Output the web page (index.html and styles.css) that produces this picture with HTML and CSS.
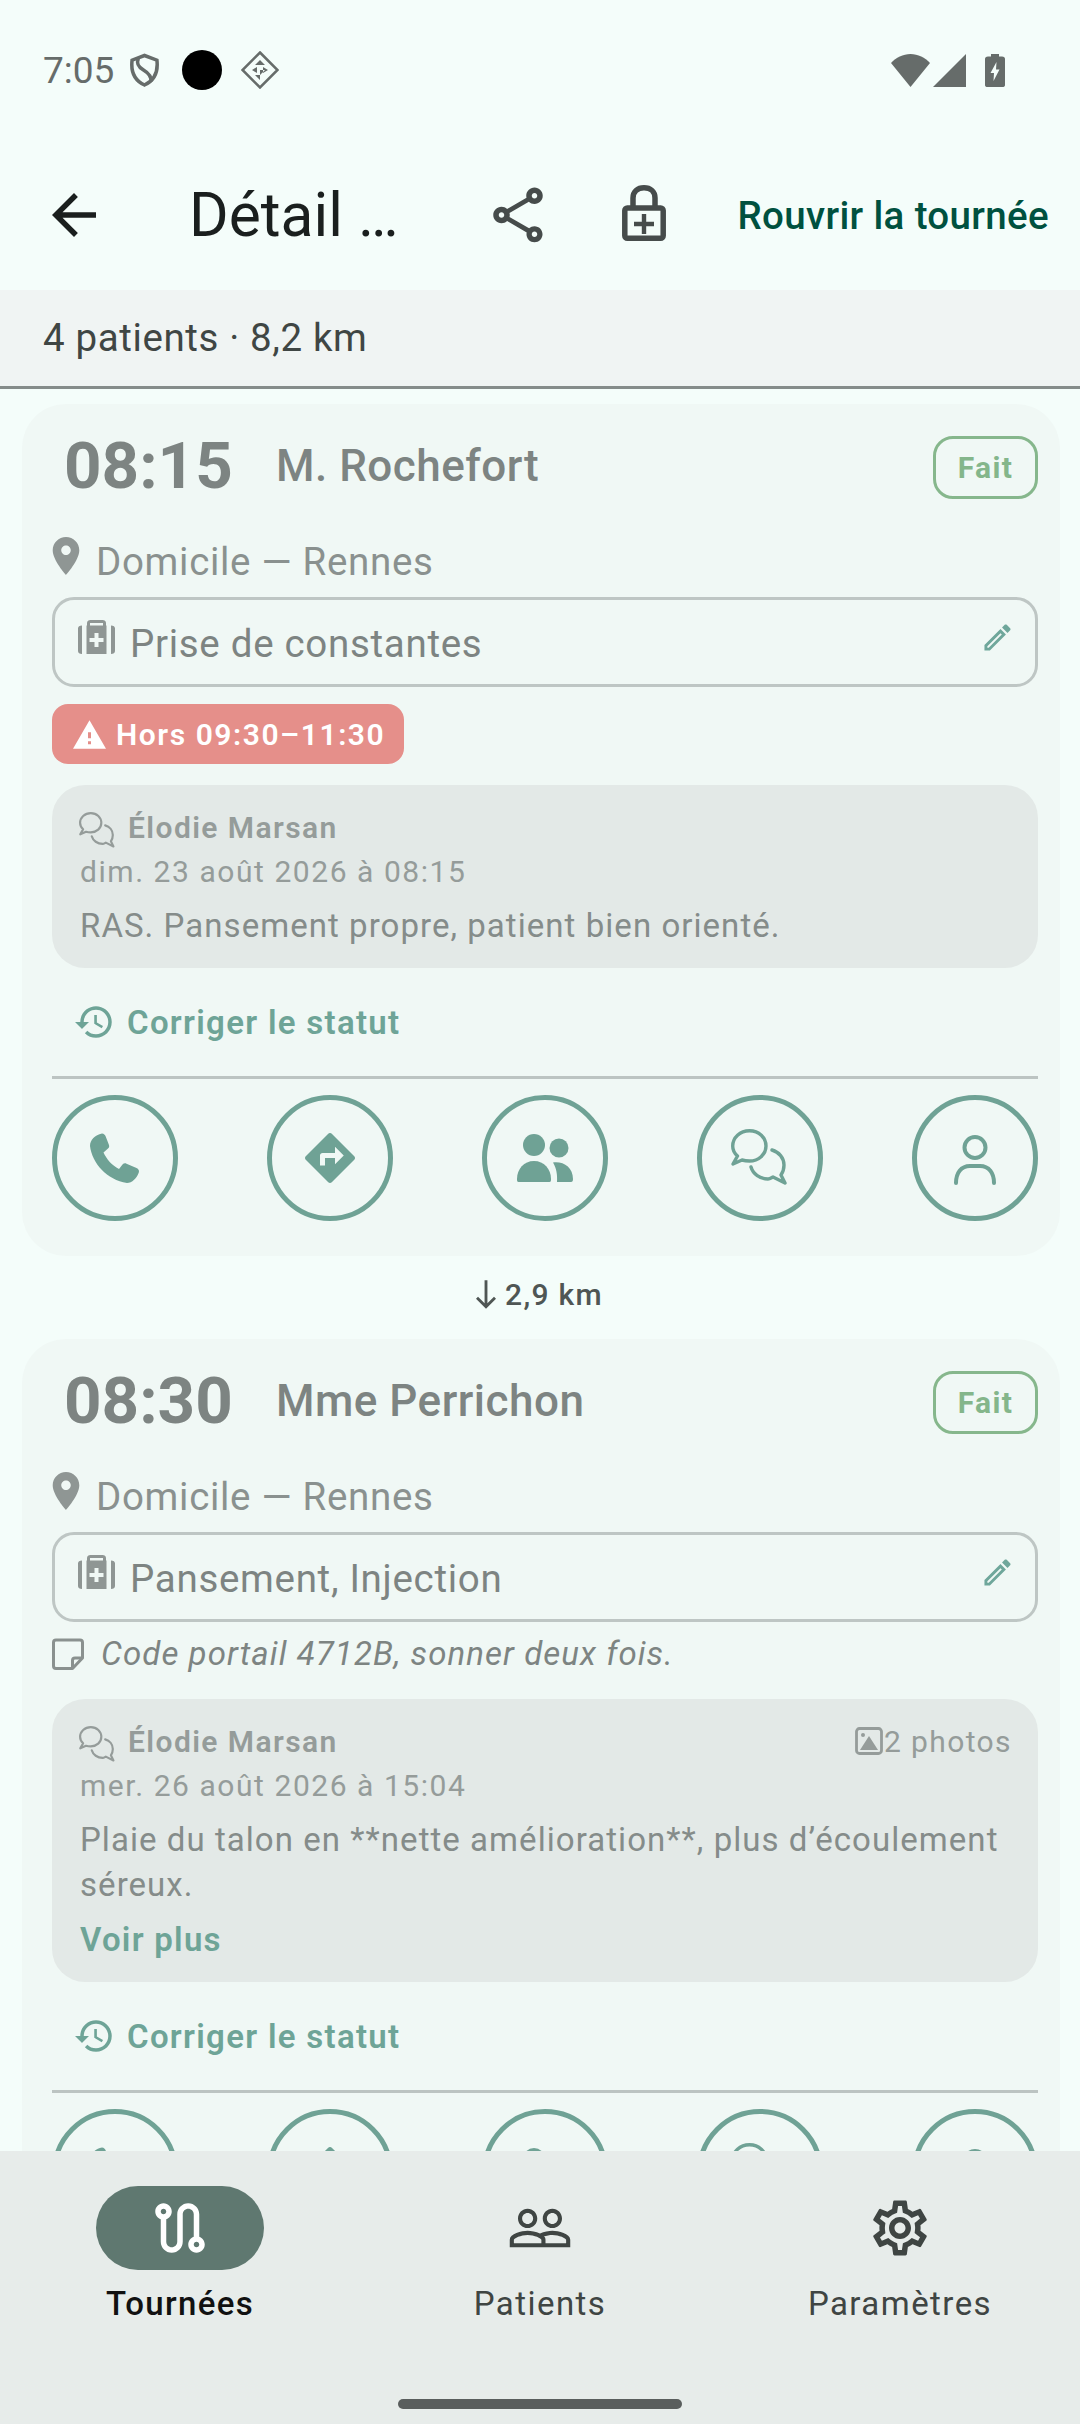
FILE: index.html
```html
<!DOCTYPE html>
<html lang="fr">
<head>
<meta charset="utf-8">
<title>Détail de la tournée</title>
<link rel="stylesheet" href="styles.css">
</head>
<body>
<svg class="sprite" aria-hidden="true">
  <symbol id="i-pin" viewBox="5 2 14 20"><path d="M12 2C8.13 2 5 5.13 5 9c0 5.25 7 13 7 13s7-7.75 7-13c0-3.87-3.13-7-7-7zm0 9.5c-1.38 0-2.5-1.12-2.5-2.5s1.12-2.5 2.5-2.5 2.5 1.12 2.5 2.5-1.12 2.5-2.5 2.5z"/></symbol>
  <symbol id="i-bag" viewBox="0 0 37 35"><path d="M0 8.500C0 6.500 1.500 5.500 4 5.500V34C1.500 34 0 33 0 31zM33 5.500C35.500 5.500 37 6.500 37 8.500V31C37 33 35.500 34 33 34zM9 5.500V3C9 1 10.500 0 12.500 0h12C26.500 0 28 1 28 3V5.500h.5V34H8.500V5.500zM12 5.500h13V3H12zM16.500 13v5h-5v4h5v5h4v-5h5v-4h-5v-5z" fill-rule="evenodd"/></symbol>
  <symbol id="i-edit" viewBox="2 2 20 20"><path d="M14.060 9.020l.92.92L5.920 19H5v-.92l9.060-9.060M17.660 3c-.25 0-.51.1-.7.29l-1.830 1.830 3.750 3.750 1.830-1.830c.39-.39.39-1.020 0-1.410l-2.340-2.340c-.2-.2-.45-.29-.71-.29zm-3.600 3.190L3 17.250V21h3.750L17.810 9.940l-3.750-3.750z"/></symbol>
  <symbol id="i-warn" viewBox="1 2 22 19"><path d="M1 21h22L12 2 1 21zm12-3h-2v-2h2v2zm0-4h-2v-4h2v4z"/></symbol>
  <symbol id="i-forum" viewBox="0 0 58 58"><g fill="none" stroke="currentColor" stroke-width="3.400" stroke-linejoin="round" stroke-linecap="round"><path d="M2 35L6.500 27C3 24 1.700 20.500 1.700 17 1.700 8.500 9 1.700 18.500 1.700S35 8.500 35 17 27.500 32 18.500 32C15.500 32 13 31.600 11 31Z"/><path d="M41 21C48 23 53 29 53 36C53 40 52 43 50 46L54 54L42 48C40 49 39 50 37 50C29 50 22 45 20 38"/></g></symbol>
  <symbol id="i-history" viewBox="1 0 24 24"><path d="M13 3c-4.970 0-9 4.030-9 9H1l3.890 3.890.07.14L9 12H6c0-3.870 3.130-7 7-7s7 3.130 7 7-3.130 7-7 7c-1.930 0-3.680-.79-4.940-2.060l-1.420 1.420C8.270 19.990 10.510 21 13 21c4.970 0 9-4.030 9-9s-4.030-9-9-9zm-1 5v5l4.280 2.540.72-1.210-3.500-2.080V8H12z"/></symbol>
  <symbol id="i-phone" viewBox="0 0 50 51"><path d="M12 .5C14 .5 15 2 15.500 3L18.800 11.500C19.500 13.500 19.300 14.500 18 15.600L13.500 19.500C16.500 26 22 32.500 29 36L32.500 31.500C33.500 30.500 35 30 36.500 30.700L46.500 35C48.500 36 49.500 37.500 48.800 39.500C47 45 42 50 37 50C17 47 2 30 0 13C0 7 5 2 12 .5Z"/></symbol>
  <symbol id="i-dir" viewBox="2 2 20 20"><path d="M21.710 11.290l-9-9c-.39-.39-1.020-.39-1.410 0l-9 9c-.39.39-.39 1.020 0 1.410l9 9c.39.39 1.020.39 1.410 0l9-9c.39-.38.39-1.010 0-1.410zM14 14.500V12h-4v3H8v-4c0-.55.45-1 1-1h5V7.500l3.500 3.500-3.500 3.500z"/></symbol>
  <symbol id="i-group" viewBox="0 0 56 48"><circle cx="17" cy="11" r="11"/><path d="M1.500 48C0 48 0 46.500 0 45 0 35 7 27 17 27S34 35 34 45C34 46.500 34 48 32.500 48Z"/><circle cx="42" cy="14" r="9.500"/><path d="M36 28.500C46 27 56 33 56 45 56 47 55.500 48 54 48H40C40.500 41 39.500 34 36 28.500Z"/></symbol>
  <symbol id="i-person" viewBox="0 0 66 66"><g fill="none" stroke="currentColor" stroke-width="4" stroke-linecap="round"><circle cx="33" cy="22.500" r="10.500"/><path d="M14 58C14 48 19 41 28 41H38C47 41 52 48 52 58"/></g></symbol>
</svg>

<header class="status">
  <span class="clock">7:05</span>
  <svg class="st-shield" viewBox="0 0 28 32"><g fill="none" stroke="currentColor" stroke-width="3.400"><path d="M14 2L26 6.500C27 15 26 25 14 30.500 2 25 1 15 2 6.500Z"/><path d="M8 5C6 10 8 13 13 16 18 19 21 22 20 27"/></g></svg>
  <span class="st-dot"></span>
  <svg class="st-diamond" viewBox="0 0 38 38"><path d="M19 1.500L36.500 19 19 36.500 1.500 19Z" fill="none" stroke="currentColor" stroke-width="2.500"/><path d="M19 9L24 14H14ZM11 19L16 16V22ZM27 19L22 16V22ZM19 29L14 24H19ZM19 19H24L19 24Z"/></svg>
  <span class="st-right">
    <svg class="st-wifi" viewBox="0 0 39 33"><path d="M19.500 33L0 9C5 3.500 12 0 19.500 0S34 3.500 39 9Z"/></svg>
    <svg class="st-signal" viewBox="0 0 33 33"><path d="M33 0V33H0Z"/></svg>
    <svg class="st-batt" viewBox="0 0 20 33"><path d="M6 0H14V2.500H17C19 2.500 20 3.500 20 5V31C20 32.500 19 33 17.500 33H2.500C1 33 0 32.500 0 31V5C0 3.500 1 2.500 3 2.500H6ZM11.500 8L5.500 19H9L8.500 27 14.500 15.500H11Z" fill-rule="evenodd"/></svg>
  </span>
</header>

<div class="appbar">
  <svg class="ic66 back" viewBox="0 0 24 24"><path d="M20 11H7.830l5.590-5.590L12 4l-8 8 8 8 1.410-1.410L7.830 13H20v-2z"/></svg>
  <h1 class="title">Détail …</h1>
  <span class="action">
    <svg class="ic66" viewBox="0 0 24 24"><path d="M18 16.080c-.76 0-1.440.3-1.960.77L8.910 12.700c.05-.23.09-.46.09-.7s-.04-.47-.09-.7l7.050-4.110c.54.5 1.250.81 2.040.81 1.660 0 3-1.340 3-3s-1.340-3-3-3-3 1.340-3 3c0 .24.04.47.09.7L8.040 9.810C7.500 9.310 6.790 9 6 9c-1.660 0-3 1.340-3 3s1.340 3 3 3c.79 0 1.500-.31 2.040-.81l7.120 4.160c-.05.21-.08.43-.08.65 0 1.610 1.310 2.920 2.920 2.920s2.920-1.310 2.920-2.920c0-1.610-1.310-2.920-2.920-2.920zM18 4c.55 0 1 .45 1 1s-.45 1-1 1-1-.45-1-1 .45-1 1-1zM6 13c-.55 0-1-.45-1-1s.45-1 1-1 1 .45 1 1-.45 1-1 1zm12 7.020c-.55 0-1-.45-1-1s.45-1 1-1 1 .45 1 1-.45 1-1 1z"/></svg>
  </span>
  <span class="action">
    <svg class="ic-lock" viewBox="0 0 44 56"><g fill="none" stroke="currentColor" stroke-width="5.500"><path d="M11 24V13C11 6.500 15.500 2.800 22 2.800S33 6.500 33 13V24"/><rect x="2.800" y="23" width="38.400" height="30.200" rx="2.500"/></g><path d="M19.800 29h4.400v7.800H32v4.400h-7.800V49h-4.400v-7.800H12v-4.400h7.800z"/></svg>
  </span>
  <span class="reopen">Rouvrir la tournée</span>
</div>

<div class="summary">4 patients · 8,2 km</div>

<main class="list">
  <article class="card">
    <div class="head">
      <span class="time">08:15</span>
      <span class="name">M. Rochefort</span>
      <span class="badge">Fait</span>
    </div>
    <div class="loc"><svg class="pin"><use href="#i-pin"/></svg><span>Domicile — Rennes</span></div>
    <div class="care">
      <svg class="bag"><use href="#i-bag"/></svg>
      <span class="care-text">Prise de constantes</span>
      <svg class="edit"><use href="#i-edit"/></svg>
    </div>
    <div class="alert"><svg class="warn"><use href="#i-warn"/></svg><span>Hors 09:30–11:30</span></div>
    <section class="report">
      <div class="report-head">
        <svg class="forum"><use href="#i-forum"/></svg>
        <span class="author">Élodie Marsan</span>
      </div>
      <div class="date">dim. 23 août 2026 à 08:15</div>
      <p class="body">RAS. Pansement propre, patient bien orienté.</p>
    </section>
    <div class="fix"><svg class="history"><use href="#i-history"/></svg><span>Corriger le statut</span></div>
    <hr class="rule">
    <div class="actions">
      <span class="round"><svg class="r-phone"><use href="#i-phone"/></svg></span>
      <span class="round"><svg class="r-dir"><use href="#i-dir"/></svg></span>
      <span class="round"><svg class="r-group"><use href="#i-group"/></svg></span>
      <span class="round"><svg class="r-forum"><use href="#i-forum"/></svg></span>
      <span class="round"><svg class="r-person"><use href="#i-person"/></svg></span>
    </div>
  </article>

  <div class="dist">
    <svg class="south" viewBox="5 2 14 20"><path d="M19 15l-1.410-1.410L13 18.170V2h-2v16.170l-4.590-4.580L5 15l7 7 7-7z"/></svg>
    <span>2,9 km</span>
  </div>

  <article class="card">
    <div class="head">
      <span class="time">08:30</span>
      <span class="name">Mme Perrichon</span>
      <span class="badge">Fait</span>
    </div>
    <div class="loc"><svg class="pin"><use href="#i-pin"/></svg><span>Domicile — Rennes</span></div>
    <div class="care">
      <svg class="bag"><use href="#i-bag"/></svg>
      <span class="care-text">Pansement, Injection</span>
      <svg class="edit"><use href="#i-edit"/></svg>
    </div>
    <div class="memo">
      <svg class="memo-ic" viewBox="0 0 32 32"><g fill="none" stroke="currentColor" stroke-width="3" stroke-linejoin="round"><path d="M4 2H28C29.500 2 30.500 3 30.500 4.500V20L20.500 30.500H4C2.500 30.500 1.500 29.500 1.500 28V4.500C1.500 3 2.500 2 4 2Z"/><path d="M30 20H23C21.500 20 20.500 21 20.500 22.500V30"/></g></svg>
      <span>Code portail 4712B, sonner deux fois.</span>
    </div>
    <section class="report">
      <div class="report-head">
        <svg class="forum"><use href="#i-forum"/></svg>
        <span class="author">Élodie Marsan</span>
        <span class="photos">
          <svg class="photo-ic" viewBox="0 0 28 28"><rect x="1.500" y="1.500" width="25" height="25" rx="3" fill="none" stroke="currentColor" stroke-width="2.800"/><circle cx="8" cy="8" r="2"/><path d="M5 23L14 9 23 23Z"/></svg>
          <span>2 photos</span>
        </span>
      </div>
      <div class="date">mer. 26 août 2026 à 15:04</div>
      <p class="body">Plaie du talon en **nette amélioration**, plus d’écoulement séreux.</p>
      <div class="more">Voir plus</div>
    </section>
    <div class="fix"><svg class="history"><use href="#i-history"/></svg><span>Corriger le statut</span></div>
    <hr class="rule">
    <div class="actions">
      <span class="round"><svg class="r-phone"><use href="#i-phone"/></svg></span>
      <span class="round"><svg class="r-dir"><use href="#i-dir"/></svg></span>
      <span class="round"><svg class="r-group"><use href="#i-group"/></svg></span>
      <span class="round"><svg class="r-forum"><use href="#i-forum"/></svg></span>
      <span class="round"><svg class="r-person"><use href="#i-person"/></svg></span>
    </div>
  </article>
</main>

<nav class="nav">
  <div class="tabs">
    <div class="tab active">
      <span class="pill">
        <svg class="ic66" viewBox="0 0 24 24"><path d="M19 15.180V7c0-2.210-1.790-4-4-4s-4 1.790-4 4v10c0 1.100-.9 2-2 2s-2-.9-2-2V8.820C8.160 8.400 9 7.300 9 6c0-1.660-1.340-3-3-3S3 4.340 3 6c0 1.300.84 2.400 2 2.820V17c0 2.210 1.790 4 4 4s4-1.790 4-4V7c0-1.100.9-2 2-2s2 .9 2 2v8.180c-1.160.41-2 1.510-2 2.820 0 1.660 1.340 3 3 3s3-1.340 3-3c0-1.300-.84-2.400-2-2.820zM6 7c-.55 0-1-.45-1-1s.45-1 1-1 1 .45 1 1-.45 1-1 1zm12 12c-.55 0-1-.45-1-1s.45-1 1-1 1 .45 1 1-.45 1-1 1z"/></svg>
      </span>
      <span class="tab-label">Tournées</span>
    </div>
    <div class="tab">
      <span class="pill">
        <svg class="ic66" viewBox="0 0 24 24"><path d="M16.500 13c-1.200 0-3.070.34-4.500 1-1.430-.67-3.300-1-4.500-1C5.330 13 1 14.080 1 16.250V19h22v-2.750c0-2.170-4.330-3.250-6.500-3.250zm-4 4.500h-10v-1.250c0-.54 2.560-1.750 5-1.750s5 1.210 5 1.750v1.250zm9 0H14v-1.250c0-.46-.2-.86-.52-1.220.88-.3 1.960-.53 3.020-.53 2.440 0 5 1.210 5 1.750v1.250zM7.500 12c1.930 0 3.500-1.570 3.500-3.500S9.430 5 7.500 5 4 6.570 4 8.500 5.570 12 7.500 12zm0-5.500c1.100 0 2 .9 2 2s-.9 2-2 2-2-.9-2-2 .9-2 2-2zm9 5.500c1.930 0 3.500-1.570 3.500-3.500S18.430 5 16.500 5 13 6.570 13 8.500s1.570 3.500 3.500 3.500zm0-5.500c1.100 0 2 .9 2 2s-.9 2-2 2-2-.9-2-2 .9-2 2-2z"/></svg>
      </span>
      <span class="tab-label">Patients</span>
    </div>
    <div class="tab">
      <span class="pill">
        <svg class="ic66" viewBox="0 0 24 24"><path d="M19.430 12.980c.04-.32.07-.64.07-.98 0-.34-.03-.66-.07-.98l2.110-1.650c.19-.15.24-.42.12-.64l-2-3.460c-.09-.16-.26-.25-.44-.25-.06 0-.12.01-.17.03l-2.490 1c-.52-.4-1.080-.73-1.690-.98l-.38-2.650C14.460 2.180 14.250 2 14 2h-4c-.25 0-.46.18-.49.42l-.38 2.650c-.61.25-1.170.59-1.690.98l-2.490-1c-.06-.02-.12-.03-.18-.03-.17 0-.34.09-.43.25l-2 3.460c-.13.22-.07.49.12.64l2.110 1.650c-.04.32-.07.65-.07.98 0 .33.03.66.07.98l-2.110 1.650c-.19.15-.24.42-.12.64l2 3.460c.09.16.26.25.44.25.06 0 .12-.01.17-.03l2.490-1c.52.4 1.080.73 1.690.98l.38 2.650c.03.24.24.42.49.42h4c.25 0 .46-.18.49-.42l.38-2.650c.61-.25 1.170-.59 1.690-.98l2.490 1c.06.02.12.03.18.03.17 0 .34-.09.43-.25l2-3.460c.12-.22.07-.49-.12-.64l-2.110-1.650zm-1.980-1.710c.04.31.05.52.05.73 0 .21-.02.43-.05.73l-.14 1.130.89.7 1.080.84-.7 1.210-1.270-.51-1.040-.42-.9.68c-.43.32-.84.56-1.250.73l-1.060.43-.16 1.130-.2 1.350h-1.400l-.19-1.350-.16-1.130-1.060-.43c-.43-.18-.83-.41-1.230-.71l-.91-.7-1.060.43-1.270.51-.7-1.210 1.080-.84.89-.7-.14-1.130c-.03-.31-.05-.54-.05-.74s.02-.43.05-.73l.14-1.130-.89-.7-1.080-.84.7-1.210 1.270.51 1.040.42.9-.68c.43-.32.84-.56 1.250-.73l1.060-.43.16-1.130.2-1.350h1.390l.19 1.350.16 1.130 1.060.43c.43.18.83.41 1.230.71l.91.7 1.060-.43 1.270-.51.7 1.210-1.070.85-.89.7.14 1.130zM12 8c-2.210 0-4 1.790-4 4s1.790 4 4 4 4-1.790 4-4-1.790-4-4-4zm0 6c-1.100 0-2-.9-2-2s.9-2 2-2 2 .9 2 2-.9 2-2 2z"/></svg>
      </span>
      <span class="tab-label">Paramètres</span>
    </div>
  </div>
  <span class="handle"></span>
</nav>
</body>
</html>
```

FILE: styles.css
```css
* { box-sizing: border-box; }
html, body { margin: 0; padding: 0; }
body {
  width: 1080px;
  height: 2424px;
  overflow: hidden;
  display: flex;
  flex-direction: column;
  background: #f4fdfa;
  font-family: Roboto, "Noto Sans", sans-serif;
  color: #1a1f1e;
}
.sprite { display: none; }
svg { flex: none; fill: currentColor; display: block; }

/* status bar */
.status {
  height: 140px;
  flex: none;
  padding: 0 75px 0 43px;
  display: flex;
  align-items: center;
  color: #666c6a;
}
.clock { font-size: 37px; width: 87px; }
.st-shield { width: 29px; height: 34px; }
.st-dot { width: 40px; height: 40px; border-radius: 50%; background: #000; margin-left: 23px; }
.st-diamond { width: 38px; height: 38px; margin-left: 19px; }
.st-right { margin-left: auto; display: flex; align-items: center; }
.st-wifi { width: 39px; height: 33px; }
.st-signal { width: 33px; height: 33px; margin-left: 3px; }
.st-batt { width: 20px; height: 33px; margin-left: 19px; }

/* app bar */
.appbar {
  height: 150px;
  flex: none;
  padding: 0 31px 0 41px;
  display: flex;
  align-items: center;
}
.ic66 { width: 66px; height: 66px; }
.back { color: #1a1f1e; }
.title { flex: 1; margin: 0 0 0 82px; font-size: 60.5px; font-weight: 400; color: #1a1f1e; white-space: nowrap; }
.action { width: 126px; display: flex; justify-content: center; color: #464c4b; }
.ic-lock { width: 44px; height: 56px; margin-top: -4px; }
.reopen { margin-left: 30px; font-size: 38.5px; font-weight: 500; letter-spacing: 0.35px; color: #00513f; white-space: nowrap; }

/* summary */
.summary {
  height: 99px;
  flex: none;
  padding: 0 43px 1px;
  display: flex;
  align-items: center;
  background: #f0f4f3;
  border-bottom: 3px solid #858c8a;
  font-size: 38.5px;
  letter-spacing: 0.62px;
  color: #3f4644;
}

/* list */
.list { flex: 1; min-height: 0; overflow: hidden; padding: 15px 20px 0 22px; }
.card {
  background: #f0f8f5;
  border-radius: 44px;
  padding: 30px 22px 35px 30px;
}
.head { height: 63px; display: flex; align-items: center; }
.time { margin-left: 12px; font-size: 65.5px; font-weight: 700; color: #7d8482; width: 212px; }
.name { font-size: 44px; font-weight: 500; letter-spacing: 0.5px; color: #7d8482; }
.badge {
  margin: 3px 0 0 auto;
  width: 105px;
  height: 63px;
  display: flex;
  align-items: center;
  justify-content: center;
  border: 3px solid #86b78c;
  border-radius: 20px;
  font-size: 30px;
  font-weight: 700;
  letter-spacing: 1.4px;
  color: #84b68b;
}
.loc {
  height: 44px;
  margin-top: 42px;
  display: flex;
  align-items: center;
  font-size: 38.5px;
  letter-spacing: 0.7px;
  color: #8a918f;
}
.pin { width: 28px; height: 38px; margin: 0 16px 10px 0; color: #8f9694; }
.care {
  height: 90px;
  margin-top: 14px;
  padding: 0 23px 0 23px;
  display: flex;
  align-items: center;
  border: 3px solid #bec6c4;
  border-radius: 22px;
  font-size: 38.5px;
  letter-spacing: 0.7px;
  color: #7d8482;
}
.bag { width: 37px; height: 35px; margin: 0 15px 10px 0; color: #8f9694; }
.care-text { flex: 1; padding-top: 2px; }
.edit { width: 29px; height: 29px; margin-bottom: 10px; color: #6fa79b; }
.alert {
  width: 352px;
  height: 60px;
  margin-top: 17px;
  padding-left: 21px;
  display: flex;
  align-items: center;
  background: #e58f8a;
  border-radius: 16px;
  font-size: 30px;
  font-weight: 600;
  letter-spacing: 1.55px;
  color: #fff;
}
.alert + .report { margin-top: 21px; }
.warn { width: 33px; height: 29px; margin-right: 10px; }
.memo {
  height: 44px;
  margin-top: 9px;
  display: flex;
  align-items: center;
  font-size: 33px;
  font-style: italic;
  letter-spacing: 1.08px;
  color: #7d8482;
}
.memo-ic { width: 32px; height: 32px; margin: 2px 17px 0 0; color: #8a918f; }
.memo + .report { margin-top: 24px; }
.report {
  padding: 20px 26px 20px 28px;
  background: #e3e9e7;
  border-radius: 33px;
}
.report-head {
  height: 44px;
  display: flex;
  align-items: center;
  font-size: 30px;
  letter-spacing: 1.4px;
  color: #959c9a;
}
.forum { width: 37px; height: 37px; margin: 6px 13px 0 -1px; }
.author { font-weight: 600; margin-left: -1px; }
.photos { margin-left: auto; display: flex; align-items: center; }
.photo-ic { width: 28px; height: 28px; margin-right: 1px; }
.date { height: 44px; line-height: 44px; padding-top: 1px; font-size: 30px; letter-spacing: 1.55px; color: #959c9a; }
.body { margin: 10px 0 0; font-size: 33px; line-height: 45px; letter-spacing: 1.05px; color: #858c8a; }
.more { height: 44px; line-height: 44px; margin-top: 11px; font-size: 33px; font-weight: 600; letter-spacing: 1.25px; color: #6ea497; }
.fix {
  height: 44px;
  margin-top: 32px;
  padding-left: 23px;
  display: flex;
  align-items: center;
  font-size: 33px;
  font-weight: 600;
  letter-spacing: 1.3px;
  color: #6ea497;
}
.history { width: 42px; height: 42px; margin-right: 10px; }
.rule { height: 3px; margin: 32px 0 16px; border: 0; background: #bcc4c2; }
.actions { display: flex; justify-content: space-between; }
.round {
  width: 126px;
  height: 126px;
  display: flex;
  align-items: center;
  justify-content: center;
  border: 5.5px solid #6fa295;
  border-radius: 50%;
  color: #6fa295;
}
.r-phone { width: 50px; height: 51px; }
.r-dir { width: 50px; height: 50px; }
.r-group { width: 56px; height: 48px; }
.r-forum { width: 58px; height: 58px; }
.r-person { width: 66px; height: 66px; }

.dist {
  height: 83px;
  padding: 0 3px 6px 0;
  display: flex;
  align-items: center;
  justify-content: center;
  font-size: 30px;
  font-weight: 500;
  letter-spacing: 1.3px;
  color: #4f5654;
}
.south { width: 20px; height: 29px; margin-right: 9px; }

/* bottom nav */
.nav {
  height: 273px;
  flex: none;
  background: #e7ecea;
  display: flex;
  flex-direction: column;
  align-items: center;
  padding-top: 35px;
}
.tabs { width: 1080px; display: flex; }
.tab { flex: 1; display: flex; flex-direction: column; align-items: center; }
.pill {
  width: 168px;
  height: 84px;
  border-radius: 42px;
  display: flex;
  align-items: center;
  justify-content: center;
  color: #3f4543;
}
.active .pill { background: #5f7870; color: #fff; }
.tab-label { margin-top: 12px; height: 44px; line-height: 44px; font-size: 33px; font-weight: 400; letter-spacing: 1.45px; color: #3f4543; }
.active .tab-label { color: #111; font-weight: 500; letter-spacing: 1.35px; }
.handle { margin-top: 73px; width: 284px; height: 10px; border-radius: 5px; background: #5a5e5d; }
```
